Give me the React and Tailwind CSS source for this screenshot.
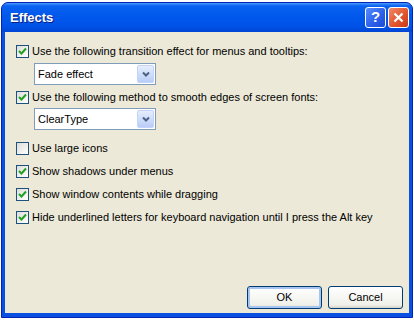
import React from 'react';

const Check = () => (
  <svg width="9" height="9" viewBox="0 0 9 9">
    <path d="M1 4 L3.5 6.5 L8 1.5" fill="none" stroke="#21a121" strokeWidth="2" />
  </svg>
);

const Checkbox = ({ checked, label }) => (
  <div className="flex items-center h-[13px]">
    <div className="w-[13px] h-[13px] border border-[#1c5180] bg-[linear-gradient(135deg,#dcdcd7,#ffffff)] flex items-center justify-center">
      {checked && <Check />}
    </div>
    <span className="ml-[3px] text-[11px] text-black leading-none">{label}</span>
  </div>
);

const Dropdown = ({ value }) => (
  <div className="ml-[18px] w-[122px] h-[22px] border border-[#7f9db9] bg-white flex items-center">
    <span className="flex-1 pl-[3px] text-[11px] text-black">{value}</span>
    <div className="w-[17px] h-[18px] mr-[1px] rounded-[2px] border border-[#c3d3fd] bg-[linear-gradient(to_bottom,#e6eefc,#b9cdf8)] flex items-center justify-center">
      <svg width="8" height="6" viewBox="0 0 8 6">
        <path d="M1 1.5 L4 4.5 L7 1.5" fill="none" stroke="#4d6185" strokeWidth="2" />
      </svg>
    </div>
  </div>
);

const XpButton = ({ label, isDefault }) => (
  <button className={`w-[75px] h-[23px] rounded-[3px] border border-[#003c74] bg-[linear-gradient(to_bottom,#ffffff,#f0f0ea_85%,#d6d0c5)] text-[11px] text-black ${isDefault ? 'shadow-[inset_0_0_0_2px_#a8c4f0]' : ''}`}>
    {label}
  </button>
);

export default function App() {
  return (
    <div className="w-[414px] h-[320px] bg-white relative font-['Liberation_Sans',Arial,sans-serif]">
      <div className="absolute left-[1px] top-[2px] w-[412px] h-[316px] rounded-t-[7px] bg-[#0a4fe0] border border-[#0024b8] flex flex-col overflow-hidden">
        {/* title bar */}
        <div className="h-[29px] flex items-center pl-[8px] pr-[3px] bg-[linear-gradient(to_bottom,#4a9cff_0%,#0b62f0_10%,#0058ec_45%,#0052e8_80%,#0045d2_100%)]">
          <span className="flex-1 text-white text-[13px] font-bold [text-shadow:1px_1px_0_#0a1e7a]">Effects</span>
          <div className="w-[21px] h-[21px] rounded-[3px] border border-white bg-[linear-gradient(135deg,#5a8cff,#2a5ee8_60%,#1a4ad8)] flex items-center justify-center text-white text-[15px] font-bold">
            ?
          </div>
          <div className="ml-[2px] w-[21px] h-[21px] rounded-[3px] border border-white bg-[linear-gradient(135deg,#f08a6a,#e0522a_60%,#c83a18)] flex items-center justify-center">
            <svg width="11" height="11" viewBox="0 0 11 11">
              <path d="M1.5 1.5 L9.5 9.5 M9.5 1.5 L1.5 9.5" stroke="#fff" strokeWidth="2.2" />
            </svg>
          </div>
        </div>
        {/* body */}
        <div className="flex-1 mx-[3px] mb-[4px] bg-[#ece9d8] flex flex-col pl-[11px] pt-[13px]">
          <Checkbox checked label="Use the following transition effect for menus and tooltips:" />
          <div className="mt-[5px]"><Dropdown value="Fade effect" /></div>
          <div className="mt-[6px]"><Checkbox checked label="Use the following method to smooth edges of screen fonts:" /></div>
          <div className="mt-[4px]"><Dropdown value="ClearType" /></div>
          <div className="mt-[12px]"><Checkbox label="Use large icons" /></div>
          <div className="mt-[10px]"><Checkbox checked label="Show shadows under menus" /></div>
          <div className="mt-[10px]"><Checkbox checked label="Show window contents while dragging" /></div>
          <div className="mt-[10px]"><Checkbox checked label="Hide underlined letters for keyboard navigation until I press the Alt key" /></div>
          <div className="mt-auto flex justify-end gap-[6px] pr-[6px] pb-[4px]">
            <XpButton label="OK" isDefault />
            <XpButton label="Cancel" />
          </div>
        </div>
      </div>
    </div>
  );
}
